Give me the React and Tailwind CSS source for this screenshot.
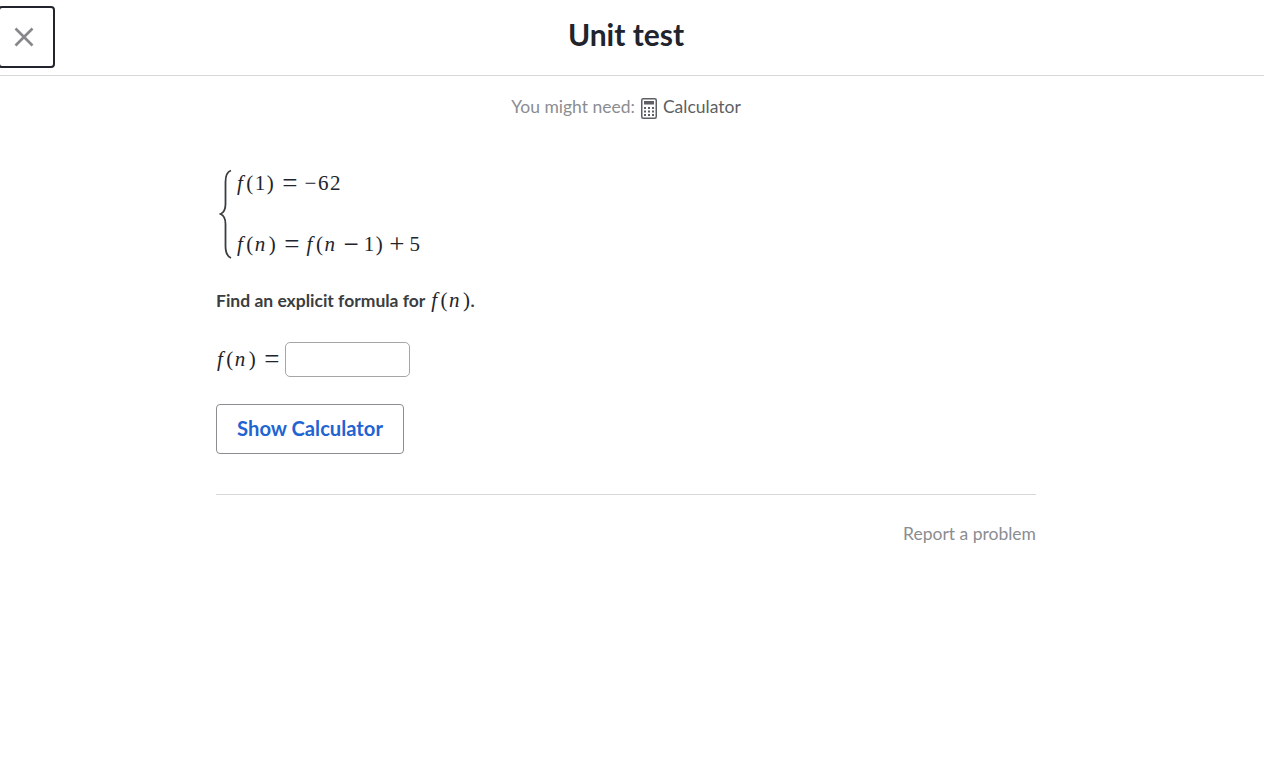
const mathFont = "font-['Liberation_Serif',serif] text-[#21242c] tracking-[1.5px]";

const F = ({ children }) => <i className="pr-[2px]">{children}</i>;

const N = () => <i className="pr-[2px]">n</i>;

// operators are wider in the reference, so they get a bigger size than the digits
const Op = ({ children, bin }) => (
  <span
    className={`inline-block translate-y-[2px] text-[27px] leading-none font-light tracking-normal ${
      bin ? "px-[5px]" : "px-[7px]"
    }`}
  >
    {children}
  </span>
);

const Main = () => (
  <div className="flex flex-col w-[820px] mx-auto">
    {/* Piecewise definition */}
    <div className={`flex items-stretch mt-[48px] h-[94px] text-[21px] ${mathFont}`}>
      <svg width="16" height="94" viewBox="0 0 16 94" className="ml-[3px] mr-[2px]" fill="none">
        <path
          d="M12 3.5 C7.5 5 6.5 9 6.5 15 L6.5 37 C6.5 42 5 45.5 1.5 47 C5 48.5 6.5 52 6.5 57 L6.5 79 C6.5 85 7.5 89 12 91"
          stroke="#3b3e40"
          strokeWidth="1.8"
        />
      </svg>
      <div className="flex flex-col justify-between pb-[1px] leading-[32px]">
        <div>
          <F>f</F>(1)<Op>=</Op>−62
        </div>
        <div>
          <F>f</F>(<N />)<Op>=</Op>
          <F>f</F>(<N />
          <Op bin>−</Op>1)<Op bin>+</Op>5
        </div>
      </div>
    </div>

    {/* Question */}
    <div className="flex items-center h-[30px] mt-[25px] text-[17.5px] font-bold text-[#3b3e40]">
      <span>Find an explicit formula for&nbsp;</span>
      <span className={`text-[21px] font-normal ml-[2px] -mr-[1px] ${mathFont}`}>
        <F>f</F>(<N />)
      </span>
      <span>.</span>
    </div>

    {/* Answer input */}
    <div className="flex items-center mt-[26px] h-[35px]">
      <span className={`text-[21px] ml-[1px] ${mathFont}`}>
        <F>f</F>(<N />)
        <span className="inline-block translate-y-[2px] text-[27px] leading-none font-light tracking-normal pl-[7px] pr-[5px]">
          =
        </span>
      </span>
      <input
        type="text"
        className="w-[125px] h-[35px] bg-white rounded-[5px] border border-[#a6a6a6] outline-none"
      />
    </div>

    <button className="w-[188px] h-[50px] mt-[27px] pb-[2px] bg-white rounded-[4px] border border-[#8b8d91] text-[20.2px] font-bold text-[#1f64d2] cursor-pointer">
      Show Calculator
    </button>

    <div className="mt-[40px] border-t border-[#d6d8da]" />

    <div className="flex justify-end mt-[27px] text-[17.5px] leading-[24px] text-[#8b8d91]">
      Report a problem
    </div>
  </div>
);

const App = () => {
  return (
    <div className="min-h-[761px] bg-white font-['Lato',sans-serif] overflow-hidden">
      {/* Header */}
      <div className="flex items-center h-[76px] pr-[12px] border-b border-[#d6d8da]">
        <button className="flex items-center justify-center w-[57px] h-[62px] -ml-[2px] -mt-[1px] pr-[5px] border-2 border-[#21242c] rounded-[4px] bg-white shrink-0">
          <svg width="24" height="24" viewBox="0 0 24 24" fill="none" stroke="#85878b" strokeWidth="2.6">
            <path d="M3.5 3.5 L20.5 20.5 M20.5 3.5 L3.5 20.5" />
          </svg>
        </button>
        <div className="flex-1 text-center pr-[55px] -mt-[8px] text-[30px] leading-[40px] font-bold text-[#21242c]">
          Unit test
        </div>
      </div>

      {/* You might need */}
      <div className="flex justify-center items-center h-[24px] mt-[19px] pr-[12px] text-[17.5px]">
        <span className="text-[#8b8d91]">You might need:</span>
        <svg width="16" height="21" viewBox="0 0 16 21" className="mx-[6px] mt-[2px]" fill="none">
          <rect x="0.75" y="0.75" width="14.5" height="19.5" rx="1.5" stroke="#5d5f63" strokeWidth="1.5" />
          <rect x="3" y="3" width="10" height="3.5" fill="#5d5f63" />
          <path
            d="M3 9h2v2H3zM7 9h2v2H7zM11 9h2v2h-2zM3 12.5h2v2H3zM7 12.5h2v2H7zM11 12.5h2v2h-2zM3 16h2v2H3zM7 16h2v2H7zM11 16h2v2h-2z"
            fill="#5d5f63"
          />
        </svg>
        <span className="text-[#5d5f63]">Calculator</span>
      </div>

      <div className="pr-[12px]">
        <Main />
      </div>
    </div>
  );
};

export default App;
